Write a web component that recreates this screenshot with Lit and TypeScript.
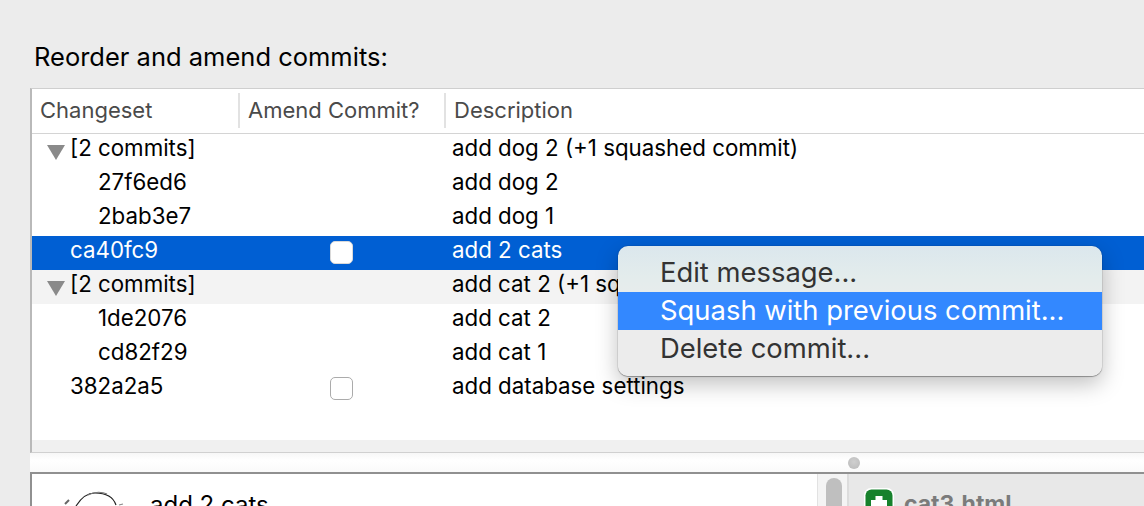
import { LitElement, html, css, nothing } from "lit";
import { customElement } from "lit/decorators.js";

type Row = {
  id: string;
  desc: string;
  depth?: number;
  group?: boolean;
  check?: boolean;
  selected?: boolean;
  striped?: boolean;
};

const rows: Row[] = [
  { id: "[2 commits]", desc: "add dog 2 (+1 squashed commit)", group: true },
  { id: "27f6ed6", desc: "add dog 2", depth: 1 },
  { id: "2bab3e7", desc: "add dog 1", depth: 1 },
  { id: "ca40fc9", desc: "add 2 cats", check: true, selected: true },
  { id: "[2 commits]", desc: "add cat 2 (+1 squashed commit)", group: true, striped: true },
  { id: "1de2076", desc: "add cat 2", depth: 1 },
  { id: "cd82f29", desc: "add cat 1", depth: 1 },
  { id: "382a2a5", desc: "add database settings", check: true },
];

@customElement("app-root")
export class AppRoot extends LitElement {
  static styles = css`
    :host {
      display: block;
      width: 1144px;
      height: 506px;
      overflow: hidden;
      position: relative;
      background: #ececec;
      font-family: Inter, "Liberation Sans", sans-serif;
      color: #000;
    }
    .title {
      height: 88px;
      box-sizing: border-box;
      padding: 42px 0 0 34px;
      font-size: 25.5px;
      line-height: 29px;
    }
    .table {
      margin-left: 30px;
      height: 365px;
      box-sizing: border-box;
      background: #fff;
      border-left: 2px solid #b9b9b9;
      border-top: 1px solid #cfcfcf;
      border-bottom: 1px solid #d0d0d0;
      display: flex;
      flex-direction: column;
    }
    .head {
      height: 44px;
      flex: none;
      display: grid;
      grid-template-columns: 207px 206px 1fr;
      border-bottom: 1px solid #d4d4d4;
      color: #4a4a4a;
      font-size: 22px;
      line-height: 42px;
    }
    .head div {
      padding-left: 8px;
      box-sizing: border-box;
    }
    .head div + div {
      position: relative;
      padding-left: 9px;
    }
    .head div + div::before {
      content: "";
      position: absolute;
      left: -1px;
      top: 4px;
      height: 35px;
      width: 2px;
      background: #e2e2e2;
    }
    .row {
      height: 34px;
      display: grid;
      grid-template-columns: 207px 206px 1fr;
      font-size: 22.3px;
      line-height: 28px;
    }
    .row.striped {
      background: #f3f3f3;
    }
    .row.selected {
      background: #005fd3;
      color: #fff;
    }
    .cs {
      display: flex;
      align-items: flex-start;
      padding-left: 38px;
    }
    .cs.child {
      padding-left: 66px;
    }
    .cs svg {
      position: absolute;
      margin: 11px 0 0 -23px;
    }
    .ck {
      display: flex;
      justify-content: center;
      padding: 5px 2px 0 0;
    }
    .box {
      width: 23px;
      height: 23px;
      box-sizing: border-box;
      border-radius: 5px;
      background: #fff;
      border: 1px solid #ababab;
    }
    .selected .box {
      border-color: #d9d9d9;
    }
    .desc {
      padding-left: 7px;
    }
    .fill {
      flex: 1;
    }
    .band {
      height: 12px;
      flex: none;
      background: #f0f0f0;
    }
    .splitter {
      height: 19px;
      background: linear-gradient(#f7f7f7, #fff 40%, #fafafa);
      margin-left: 30px;
      display: flex;
      justify-content: flex-end;
      padding-right: 284px;
      align-items: center;
    }
    .dot {
      width: 12px;
      height: 12px;
      border-radius: 50%;
      background: radial-gradient(circle at 50% 40%, #cfcfcf, #b9b9b9);
    }
    .bottom {
      margin-left: 30px;
      border-top: 2px solid #909090;
      display: grid;
      grid-template-columns: 787px 32px 1fr;
      height: 40px;
    }
    .commit {
      background: #fff;
      border-left: 2px solid #909090;
      display: flex;
      overflow: hidden;
    }
    .commit svg {
      margin: 16px 0 0 23px;
      flex: none;
    }
    .commit span {
      margin: 17px 0 0 25px;
      font-size: 24px;
      line-height: 27px;
    }
    .scroll {
      background: #f4f4f4;
      border-left: 1px solid #e2e2e2;
      border-right: 2px solid #dcdcdc;
      display: flex;
      justify-content: center;
    }
    .thumb {
      width: 16px;
      height: 60px;
      margin: 4px 0 0 2px;
      border-radius: 8px;
      background: #bfbfbf;
    }
    .files {
      background: #e8e8e8;
      display: flex;
      overflow: hidden;
    }
    .plus {
      flex: none;
      margin: 14px 0 0 15px;
      width: 30px;
      height: 30px;
    }
    .files span {
      margin: 17px 0 0 10px;
      font-size: 23px;
      font-weight: 700;
      line-height: 27px;
      color: #7b7b7b;
    }
    .menu {
      position: absolute;
      left: 618px;
      top: 246px;
      width: 484px;
      height: 130px;
      box-sizing: border-box;
      padding-top: 8px;
      border-radius: 10px;
      background: linear-gradient(#dbe7ed 0, #e3ecec 30px, #ececec 70px);
      box-shadow: 0 0 1px rgba(0, 0, 0, 0.55), 0 1px 1px rgba(0, 0, 0, 0.3), 0 8px 22px rgba(0, 0, 0, 0.25);
      font-size: 27.4px;
      color: #333;
    }
    .menu div {
      height: 38px;
      line-height: 36px;
      padding-left: 42px;
    }
    .menu .on {
      background: #3388ff;
      color: #fff;
    }
  `;

  private renderRow(r: Row) {
    const cls = ["row", r.selected ? "selected" : "", r.striped ? "striped" : ""].join(" ");
    return html`
      <div class=${cls}>
        <div class="cs ${r.depth ? "child" : ""}">
          ${r.group
            ? html`<svg width="18" height="15" viewBox="0 0 18 15"><path d="M0 0h18L9 15z" fill="#8a8a8a" /></svg>`
            : nothing}
          ${r.id}
        </div>
        <div class="ck">${r.check ? html`<div class="box"></div>` : nothing}</div>
        <div class="desc">${r.desc}</div>
      </div>
    `;
  }

  render() {
    return html`
      <div class="title">Reorder and amend commits:</div>
      <div class="table">
        <div class="head">
          <div>Changeset</div>
          <div>Amend Commit?</div>
          <div>Description</div>
        </div>
        ${rows.map((r) => this.renderRow(r))}
        <div class="fill"></div>
        <div class="band"></div>
      </div>
      <div class="splitter"><div class="dot"></div></div>
      <div class="bottom">
        <div class="commit">
          <svg width="70" height="24" viewBox="0 0 70 24" fill="none" stroke="#222" stroke-width="1.2">
            <path d="M21 16C26 8 32 3 40 3c10 0 18 3 21 12" />
            <path d="M33 5c7-4 15-3 19-1" stroke="#777" />
            <path d="M10 14l4-4" stroke="#666" stroke-width="2" />
            <path d="M64 15l4-1" stroke="#888" />
          </svg>
          <span>add 2 cats</span>
        </div>
        <div class="scroll"><div class="thumb"></div></div>
        <div class="files">
          <svg class="plus" viewBox="0 0 30 30">
            <rect x="0" y="0" width="30" height="30" rx="7" fill="#fff" />
            <rect x="1.5" y="1.5" width="27" height="27" rx="6" fill="#17812c" />
            <path d="M11.5 8h7v4h4.500v7h-4.500v4h-7v-4H7v-7h4.500z" fill="#fff" />
          </svg>
          <span>cat3.html</span>
        </div>
      </div>
      <div class="menu">
        <div>Edit message...</div>
        <div class="on">Squash with previous commit...</div>
        <div>Delete commit...</div>
      </div>
    `;
  }
}
